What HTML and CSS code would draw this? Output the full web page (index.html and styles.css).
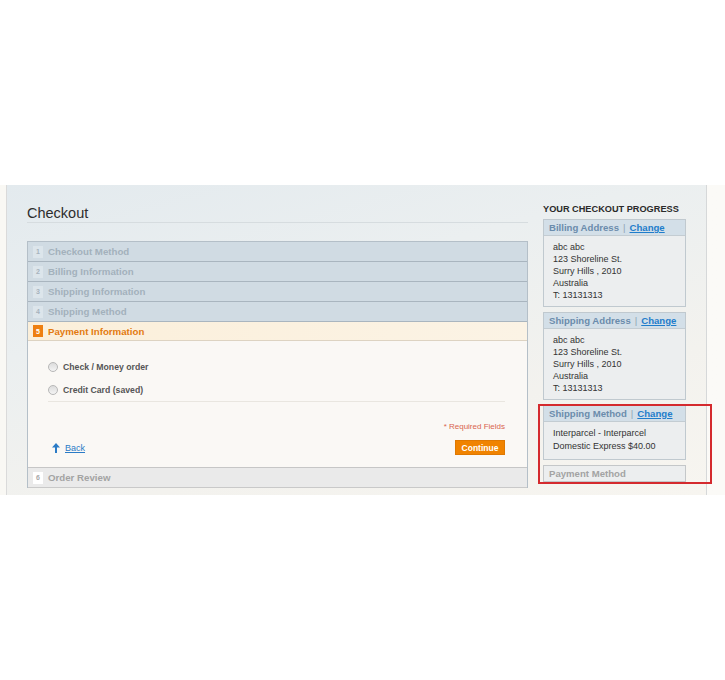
FILE: index.html
```html
<!DOCTYPE html>
<html lang="en">
<head>
    <meta charset="UTF-8">
    <title>Checkout</title>
    <link rel="stylesheet" href="styles.css">
</head>
<body>
    <div class="stage">
        <div class="frame">
            <div class="main">
                <h1 class="page-title">Checkout</h1>
                <ol class="steps">
                    <li class="step"><div class="step-head"><span class="num">1</span>Checkout Method</div></li>
                    <li class="step"><div class="step-head"><span class="num">2</span>Billing Information</div></li>
                    <li class="step"><div class="step-head"><span class="num">3</span>Shipping Information</div></li>
                    <li class="step"><div class="step-head"><span class="num">4</span>Shipping Method</div></li>
                    <li class="step active">
                        <div class="step-head"><span class="num">5</span>Payment Information</div>
                        <div class="step-body">
                            <ul class="methods">
                                <li><span class="radio"></span>Check / Money order</li>
                                <li><span class="radio"></span>Credit Card (saved)</li>
                            </ul>
                            <p class="required">* Required Fields</p>
                            <div class="actions">
                                <a class="back" href="#">
                                    <svg width="8" height="10" viewBox="0 0 8 10"><path d="M4 0 L8 4.5 H5 V10 H3 V4.5 H0 Z" fill="#2a7bc6"/></svg>
                                    <span>Back</span>
                                </a>
                                <button class="btn">Continue</button>
                            </div>
                        </div>
                    </li>
                    <li class="step review"><div class="step-head"><span class="num">6</span>Order Review</div></li>
                </ol>
            </div>

            <aside class="sidebar">
                <h2 class="block-title">YOUR CHECKOUT PROGRESS</h2>
                <div class="box">
                    <div class="box-head">Billing Address <span class="sep">|</span> <a href="#">Change</a></div>
                    <div class="box-body">
                        abc abc<br>
                        123 Shoreline St.<br>
                        Surry Hills , 2010<br>
                        Australia<br>
                        T: 13131313
                    </div>
                </div>
                <div class="box">
                    <div class="box-head">Shipping Address <span class="sep">|</span> <a href="#">Change</a></div>
                    <div class="box-body">
                        abc abc<br>
                        123 Shoreline St.<br>
                        Surry Hills , 2010<br>
                        Australia<br>
                        T: 13131313
                    </div>
                </div>
                <div class="box">
                    <div class="box-head">Shipping Method <span class="sep">|</span> <a href="#">Change</a></div>
                    <div class="box-body short">
                        Interparcel - Interparcel<br>
                        Domestic Express $40.00
                    </div>
                </div>
                <div class="box pending">
                    <div class="box-head">Payment Method</div>
                </div>
                <div class="highlight"></div>
            </aside>
        </div>
    </div>
</body>
</html>
```

FILE: styles.css
```css
body {
    margin: 0;
    padding: 0;
    background: #fff;
    font-family: 'Liberation Sans', Arial, sans-serif;
    color: #333;
}
.stage {
    width: 725px;
    height: 310px;
    margin-top: 185px;
    background: linear-gradient(to right, #f9f8f4, #fbfaf7);
}
.frame {
    margin-left: 6px;
    width: 699px;
    height: 310px;
    display: flex;
    border-left: 1px solid #dadada;
    border-right: 1px solid #d6d8d9;
    background: linear-gradient(165deg, #e3eaee 0%, #ebeff0 35%, #f3f2ee 70%, #f7f5f0 100%);
}
.main {
    width: 501px;
    padding-left: 20px;
}
.page-title {
    margin: 0;
    padding-top: 19px;
    font-size: 14.5px;
    line-height: 18px;
    font-weight: normal;
    color: #2d2d2d;
    border-bottom: 1px solid #d6dcdf;
}
.steps {
    list-style: none;
    margin: 18px 0 0;
    padding: 0;
    border: 1px solid #b4bfc8;
    border-bottom: none;
}
.step-head {
    height: 19px;
    display: flex;
    align-items: center;
    padding-left: 5px;
    background: #d0dbe3;
    border-bottom: 1px solid #a9b5bf;
    font-size: 9.7px;
    font-weight: bold;
    color: #a3b1bc;
}
.num {
    width: 10px;
    height: 12px;
    margin-right: 5px;
    display: flex;
    align-items: center;
    justify-content: center;
    background: #dce5eb;
    font-size: 7px;
    color: #a7b3bd;
}
.active .step-head {
    height: 18px;
    background: linear-gradient(to right, #fbefda, #fbf3e5);
    border-bottom: 1px solid #ddd3c2;
    color: #e37a0f;
}
.active .num {
    background: #ee7f10;
    color: #fff;
}
.step-body {
    height: 126px;
    padding: 0 22px 0 20px;
    background: #faf8f5;
    border-bottom: 1px solid #c6c6c6;
}
.methods {
    list-style: none;
    margin: 0;
    padding: 14px 0 0;
    border-bottom: 1px solid #e9e6e0;
}
.methods li {
    height: 23px;
    display: flex;
    align-items: center;
    font-size: 8.7px;
    font-weight: bold;
    color: #555;
}
.radio {
    width: 8px;
    height: 8px;
    margin-right: 5px;
    border: 1px solid #b7b7b7;
    border-radius: 50%;
    background: linear-gradient(#dcdcdc, #f4f4f4);
}
.required {
    margin: 19px 0 0;
    text-align: right;
    font-size: 8px;
    line-height: 12px;
    color: #d9654f;
}
.actions {
    margin-top: 7px;
    display: flex;
    justify-content: space-between;
    align-items: center;
}
.back {
    display: flex;
    align-items: center;
    gap: 5px;
    padding-left: 4px;
    font-size: 9px;
    color: #2a7bc6;
}
.btn {
    width: 50px;
    height: 15px;
    padding: 0;
    border: 1px solid #df7800;
    background: #f08300;
    color: #fff;
    font-family: 'Liberation Sans', Arial, sans-serif;
    font-size: 8.5px;
    font-weight: bold;
}
.review .step-head {
    background: #eaeaea;
    border-bottom: 1px solid #c9c9c9;
    color: #a3a3a3;
}
.review .num {
    background: #fff;
    color: #a8a8a8;
}
.sidebar {
    position: relative;
    width: 143px;
    padding-left: 15px;
}
.block-title {
    margin: 18px 0 4px;
    font-size: 9.2px;
    line-height: 12px;
    font-weight: bold;
    color: #2a2a2a;
    white-space: nowrap;
}
.box {
    margin-bottom: 5px;
    border: 1px solid #c0c9cf;
}
.box-head {
    height: 15px;
    display: flex;
    align-items: center;
    gap: 4px;
    padding-left: 5px;
    background: #d3dfe8;
    border-bottom: 1px solid #c3ccd2;
    font-size: 9.6px;
    font-weight: bold;
    color: #6b8cac;
}
.box-head .sep {
    color: #8fa3b4;
    font-weight: normal;
}
.box-head a {
    color: #1f7dcb;
}
.box-body {
    padding: 5px 9px 5px;
    background: #eceeef;
    font-size: 9px;
    line-height: 12px;
    color: #333;
}
.box-body.short {
    padding: 5px 9px 6px;
    line-height: 13px;
}
.pending {
    border-color: #c4c7c9;
}
.pending .box-head {
    background: #eceeef;
    border-bottom: none;
    color: #a3a3a3;
}
.highlight {
    position: absolute;
    left: 10px;
    top: 219px;
    width: 174px;
    height: 80px;
    box-sizing: border-box;
    border: 2px solid #d42a2e;
}
```
